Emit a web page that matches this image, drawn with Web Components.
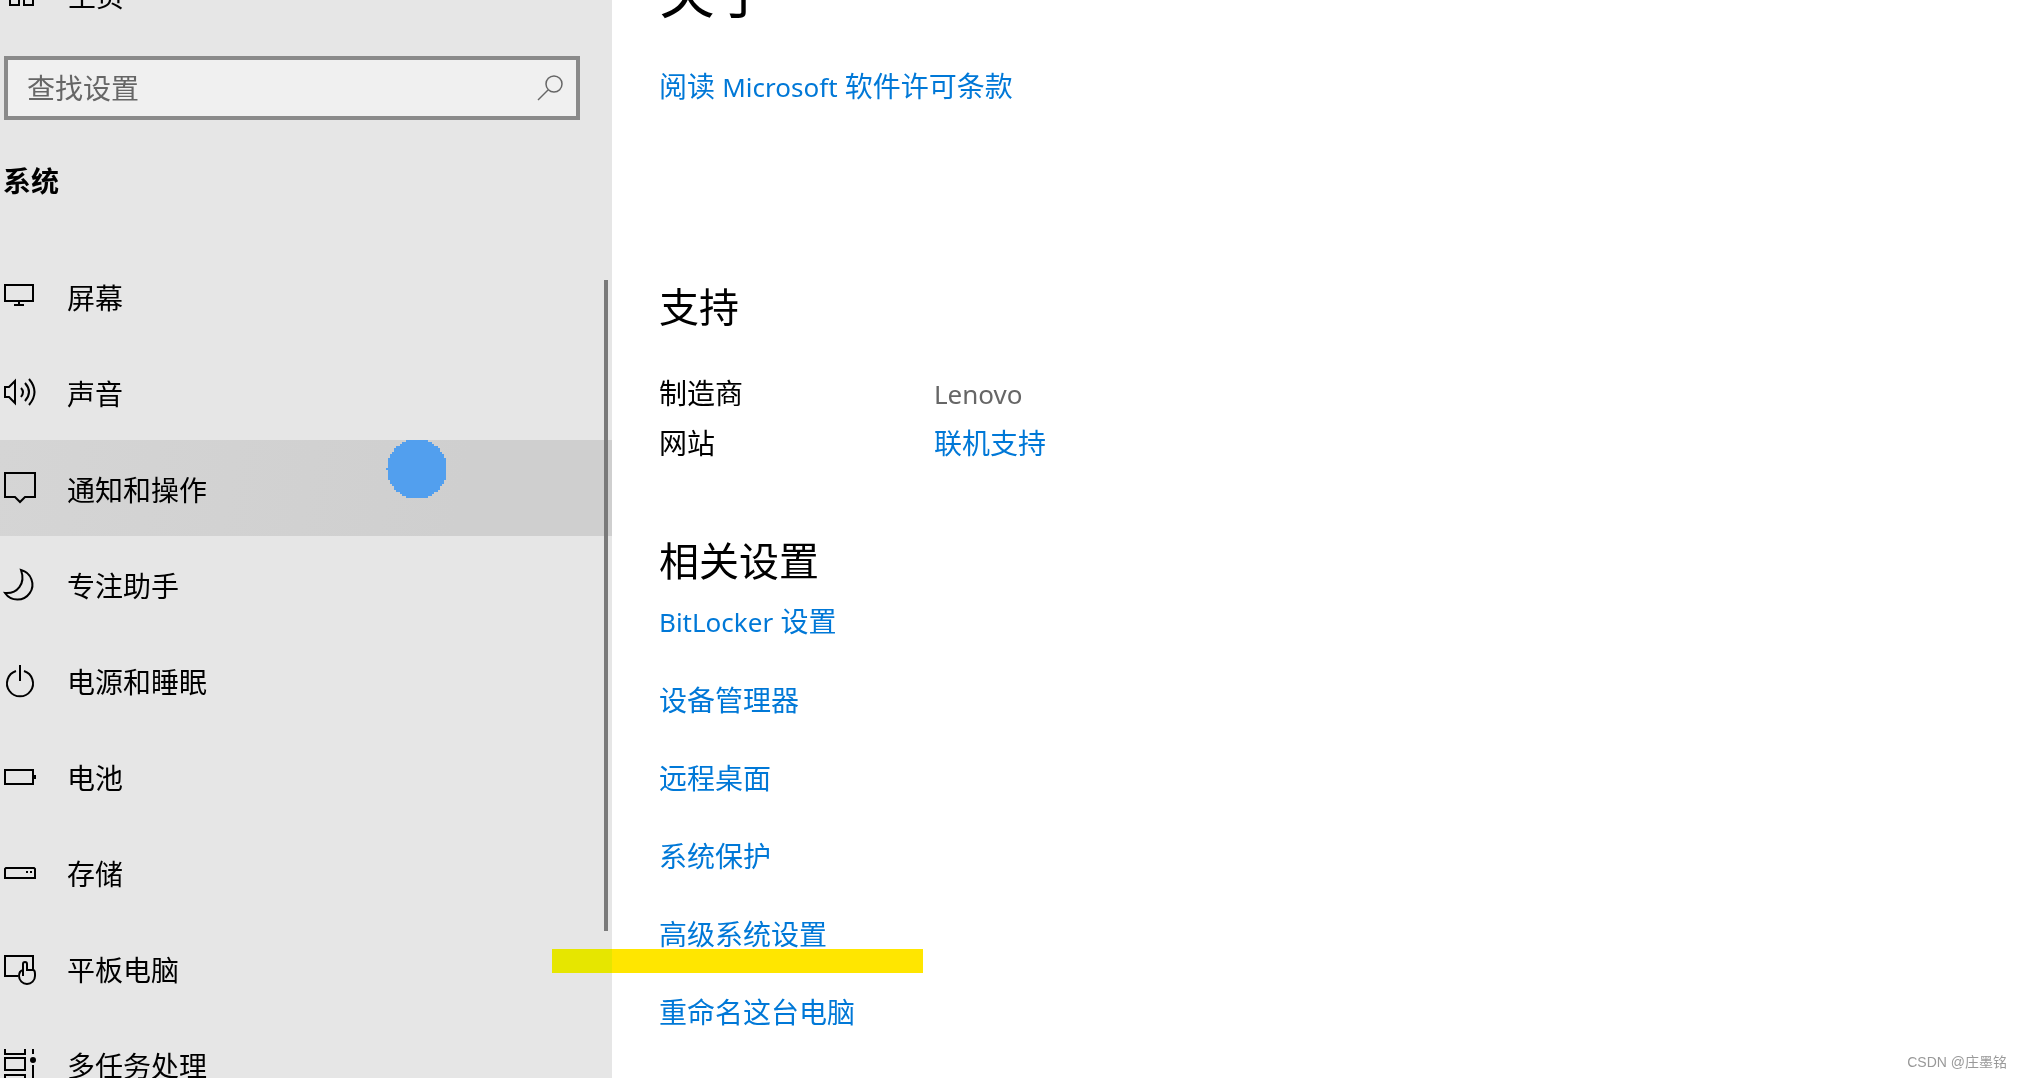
<!DOCTYPE html>
<html lang="zh-CN">
<head>
<meta charset="utf-8">
<title>设置</title>
<style>
  html, body {
    margin: 0;
    height: 100%;
    overflow: hidden;
    background: #fff;
    color: #000;
    font: 28px/40px "Noto Sans", "Noto Sans CJK SC", sans-serif;
  }
</style>
</head>
<body>

<settings-window>
  <settings-nav slot="nav" heading="系统" home="主页">
    <settings-item icon="screen">屏幕</settings-item>
    <settings-item icon="sound">声音</settings-item>
    <settings-item icon="notify" status="on">通知和操作</settings-item>
    <settings-item icon="moon">专注助手</settings-item>
    <settings-item icon="power">电源和睡眠</settings-item>
    <settings-item icon="battery">电池</settings-item>
    <settings-item icon="storage">存储</settings-item>
    <settings-item icon="tablet">平板电脑</settings-item>
    <settings-item icon="tasks">多任务处理</settings-item>
  </settings-nav>

  <settings-about></settings-about>
</settings-window>

<script>
const icons = {
  home: '<path d="M6 12v13h9v-9h5v9h9V12"/><path d="M17.500 1L4 14M17.500 1L31 14"/>',
  screen: '<path d="M1 5h28v16H1zM15 21v4M10 25h10"/>',
  sound: '<path d="M1 11h4l6-6v22l-6-6H1z"/><path d="M17 12q4 4 0 9M21 7q8 9 0 18M25 3q11 13 0 26"/>',
  notify: '<path d="M1 1h30v24h-10l-5 5-5-5H1z"/>',
  moon: '<path d="M17 2A15 15 0 1 1 1 25C13 26 22 16 17 2z"/>',
  power: '<path d="M12 7A13 13 0 1 0 20 7M16 1v16"/>',
  battery: '<path d="M1 10h28v14H1zM31 15v4"/>',
  storage: '<path d="M1 22v-9l1-1h28l1 1v9z"/><path d="M22 16h2M26 16h2"/>',
  tablet: '<path d="M14 24H1V4h28v14"/><path d="M19 24V12q0-2 2-2t2 2v6h6q2 0 2 4v2a8 8 0 0 1-16 0q0-5 4-6"/>',
  tasks: '<path d="M1 1v5h20V1M1 10h20v12H1zM1 32v-5h20v5M29 1v5M29 17v15"/><circle cx="29" cy="12" r="2" fill="currentColor"/>',
  search: '<g stroke-width="1.500"><circle cx="22" cy="12" r="8"/><path d="M16 18L6 28"/></g>'
}

class SettingsIcon extends HTMLElement {
  constructor() {
    super();
    this.attachShadow({ mode: 'open' });
  }

  connectedCallback() {
    this.shadowRoot.innerHTML = `
      <style>
        :host { display: block; flex: none; width: 32px; height: 32px; }
        svg { display: block; fill: none; stroke: currentColor; stroke-width: 2; overflow: visible; }
      </style>
      <svg width="32" height="32" viewBox="0 0 32 32" aria-hidden="true">${icons[this.getAttribute('name')]}</svg>
    `;
  }
}

class SettingsItem extends HTMLElement {
  constructor() {
    super();
    this.attachShadow({ mode: 'open' });
  }

  connectedCallback() {
    const on = this.getAttribute('status') === 'on'

    this.shadowRoot.innerHTML = `
      <style>
        :host { display: block; position: relative; }
        button {
          display: flex;
          align-items: center;
          gap: 31px;
          width: 100%;
          height: 96px;
          padding: 0 4px;
          border: 0;
          background: none;
          color: inherit;
          font: inherit;
          text-align: left;
        }
        button.on { background: linear-gradient(100deg, #d5d5d5, #cfcfcf 75%); }
        span { padding-top: 4px; }
        .pointer { position: absolute; left: 386px; top: 0; fill: #529fee; }
      </style>
      <button class="${on ? 'on' : ''}">
        <settings-icon name="${this.getAttribute('icon')}"></settings-icon>
        <span><slot></slot></span>
      </button>
      ${on ? `<svg class="pointer" width="60" height="58" viewBox="-1 0 30 29" shape-rendering="crispEdges">
        <path d="M9 0h11v1h2v1h1v1h2v1h1v2h1v1h1v2h1v11h-1v2h-1v1h-1v2h-1v1h-2v1h-1v1h-2v1h-11v-1h-2v-1h-1v-1h-2v-1h-1v-2h-1v-1h-1v-2h-1v-11h1v-2h1v-1h1v-2h1v-1h2v-1h1v-1h2z"/>
        <path d="M-1 14h1v1h-1z"/>
      </svg>` : ''}
    `;
  }
}

class SettingsNav extends HTMLElement {
  constructor() {
    super();
    this.attachShadow({ mode: 'open' });
  }

  connectedCallback() {
    this.shadowRoot.innerHTML = `
      <style>
        :host { display: block; position: relative; height: 100%; background: #e6e6e6; overflow: hidden; }
        .home {
          display: flex;
          align-items: center;
          gap: 32px;
          height: 40px;
          margin-top: -24px;
          padding: 0 4px;
          border: 0;
          background: none;
          color: inherit;
          font: inherit;
        }
        .search {
          display: flex;
          align-items: center;
          height: 56px;
          margin: 40px 32px 0 4px;
          padding-right: 12px;
          border: 4px solid #8a8a8a;
          background: #f0f0f0;
          color: #666;
        }
        input {
          flex: 1;
          min-width: 0;
          padding: 0 0 0 19px;
          border: 0;
          outline: 0;
          background: none;
          font: inherit;
        }
        input::placeholder { color: #666; opacity: 1; }
        h2 { margin: 41px 3px 47px; font-size: 28px; line-height: 40px; }
        .bar { position: absolute; right: 4px; top: 280px; bottom: 147px; width: 4px; background: #7a7a7a; }
      </style>
      <button class="home"><settings-icon name="home"></settings-icon>${this.getAttribute('home')}</button>
      <label class="search">
        <input type="text" placeholder="查找设置" aria-label="查找设置">
        <settings-icon name="search"></settings-icon>
      </label>
      <h2>${this.getAttribute('heading')}</h2>
      <nav><slot></slot></nav>
      <div class="bar"></div>
    `;
  }
}

class SettingsLink extends HTMLElement {
  constructor() {
    super();
    this.attachShadow({ mode: 'open' });
  }

  connectedCallback() {
    this.shadowRoot.innerHTML = `
      <style>
        :host { display: block; position: relative; }
        a { color: #0078d7; text-decoration: none; }
        .mark {
          position: absolute;
          left: -107px;
          top: 35px;
          width: 371px;
          height: 24px;
          background: #ffe600;
          mix-blend-mode: darken;
        }
      </style>
      <a href="#"><slot></slot></a>
      ${this.hasAttribute('marked') ? '<div class="mark"></div>' : ''}
    `;
  }
}

class SettingsAbout extends HTMLElement {
  constructor() {
    super();
    this.attachShadow({ mode: 'open' });

    this.shadowRoot.innerHTML = `
      <style>
        :host { display: block; padding-left: 47px; }
        h1, h2 { margin: 0; font-weight: 400; }
        h1 { margin-top: -49px; font-size: 56px; line-height: 80px; }
        h2 { font-size: 40px; line-height: 56px; }
        .terms { margin: 35px 0 172px; }
        table { margin: 33px 0 65px; border-collapse: collapse; }
        th, td { height: 50px; padding: 0; font-weight: 400; text-align: left; }
        th { width: 275px; }
        td { color: #666; }
        .related { display: flex; flex-direction: column; gap: 38px; margin-top: 12px; }
        .latin { font-size: 26px; }
      </style>
      <h1>关于</h1>
      <settings-link class="terms">阅读 <span class="latin">Microsoft</span> 软件许可条款</settings-link>
      <h2>支持</h2>
      <table>
        <tr><th scope="row">制造商</th><td><span class="latin">Lenovo</span></td></tr>
        <tr><th scope="row">网站</th><td><settings-link>联机支持</settings-link></td></tr>
      </table>
      <h2>相关设置</h2>
      <div class="related">
        <settings-link><span class="latin">BitLocker</span> 设置</settings-link>
        <settings-link>设备管理器</settings-link>
        <settings-link>远程桌面</settings-link>
        <settings-link>系统保护</settings-link>
        <settings-link marked>高级系统设置</settings-link>
        <settings-link>重命名这台电脑</settings-link>
      </div>
    `;
  }
}

class SettingsWindow extends HTMLElement {
  constructor() {
    super();
    this.attachShadow({ mode: 'open' });

    this.shadowRoot.innerHTML = `
      <style>
        :host { display: grid; grid-template-columns: 612px 1fr; height: 100vh; overflow: hidden; position: relative; }
        .nav { min-height: 0; }
        .credit {
          position: absolute;
          right: 15px;
          bottom: 6px;
          color: #999;
          font: 14px/20px "Liberation Sans", "Noto Sans CJK SC", sans-serif;
        }
      </style>
      <div class="nav"><slot name="nav"></slot></div>
      <main><slot></slot></main>
      <div class="credit">CSDN @庄墨铭</div>
    `;
  }
}

customElements.define('settings-icon', SettingsIcon);
customElements.define('settings-item', SettingsItem);
customElements.define('settings-nav', SettingsNav);
customElements.define('settings-link', SettingsLink);
customElements.define('settings-about', SettingsAbout);
customElements.define('settings-window', SettingsWindow);
</script>
</body>
</html>
